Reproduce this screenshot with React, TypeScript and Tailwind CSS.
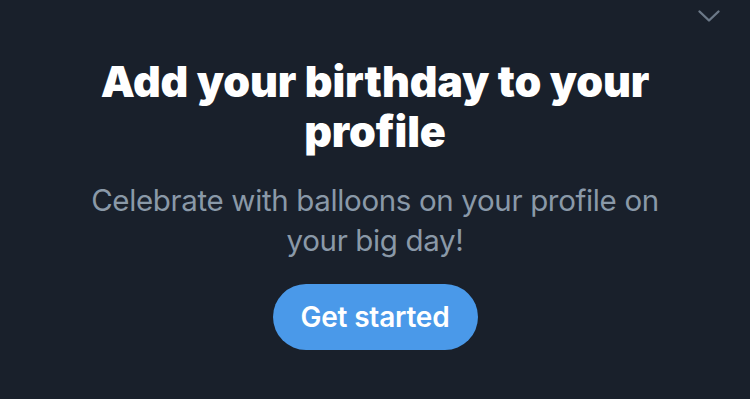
export default function App() {
  return (
    <div className="w-[750px] h-[399px] bg-[#19202b] relative overflow-hidden" style={{ fontFamily: "Inter, 'Noto Sans', sans-serif" }}>
      <svg className="absolute left-[697px] top-[8px]" width="24" height="16" viewBox="0 0 24 16" fill="none">
        <path d="M2.5 3.5 L12 12.5 L21.5 3.5" stroke="#6b7887" strokeWidth="2.4" strokeLinecap="round" strokeLinejoin="round" />
      </svg>
      <div className="flex flex-col items-center pt-[56px]">
        <h1 className="text-white text-[43px] leading-[50px] font-black text-center w-[620px] tracking-[-0.1px]">
          Add your birthday to your profile
        </h1>
        <p className="mt-[24px] text-[#8a99a8] text-[29.5px] leading-[40px] text-center w-[590px] tracking-[-0.35px]">
          Celebrate with balloons on your profile on your big day!
        </p>
        <button className="mt-[24px] w-[205px] h-[66px] rounded-full bg-[#4a99e9] text-white text-[28px] font-semibold tracking-[-0.2px]">
          Get started
        </button>
      </div>
    </div>
  );
}
